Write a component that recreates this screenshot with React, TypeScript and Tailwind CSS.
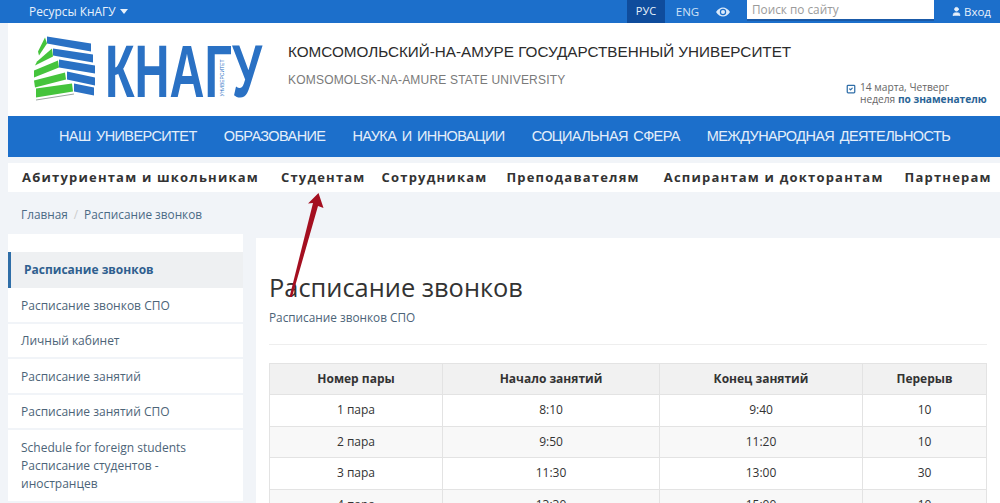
import { User, SquareCheck } from "lucide-react";

const mainNav = ["НАШ УНИВЕРСИТЕТ", "ОБРАЗОВАНИЕ", "НАУКА И ИННОВАЦИИ", "СОЦИАЛЬНАЯ СФЕРА", "МЕЖДУНАРОДНАЯ ДЕЯТЕЛЬНОСТЬ"];
const audience = [
    { label: "Абитуриентам и школьникам", cls: "" },
    { label: "Студентам", cls: "ml-[22px]" },
    { label: "Сотрудникам", cls: "ml-[16px]" },
    { label: "Преподавателям", cls: "ml-[19px]" },
    { label: "Аспирантам и докторантам", cls: "ml-[24px]" },
    { label: "Партнерам", cls: "ml-[21px]" },
];
const sideItems = ["Расписание звонков СПО", "Личный кабинет", "Расписание занятий", "Расписание занятий СПО"];
const rows = [
    ["1 пара", "8:10", "9:40", "10"],
    ["2 пара", "9:50", "11:20", "10"],
    ["3 пара", "11:30", "13:00", "30"],
    ["4 пара", "13:30", "15:00", "10"],
];

function Logo() {
    return (
        <svg viewBox="0 0 235 70" className="w-[235px] h-[70px] shrink-0">
            <g transform="translate(0,-1.5)">
                <g fill="#2a71c4">
                    <polygon points="17,3 61,10 61,18 17,10" />
                    <polygon points="23,15 63,21 63,29 23,22" />
                    <polygon points="29,26 65,32 65,40 29,34" />
                    <polygon points="37,38 65,44 65,52 37,46" />
                    <polygon points="44,50 64,54 64,62 44,58" />
                </g>
                <g fill="#45c43c">
                    <polygon points="15,4 17,10 9,22 8,18" />
                    <polygon points="22,15 23,23 5,32 7,28" />
                    <polygon points="28,27 29,34 4,44 4,37" />
                    <polygon points="35,39 36,46 5,54 4,47" />
                    <polygon points="42,50 43,58 6,64 6,55" />
                </g>
                <polygon points="6,66 44,60 44,61 6,67" fill="#9aa5a0" />
            </g>
            <text x="75" y="61.5" textLength="157" lengthAdjust="spacingAndGlyphs" fill="#2a71c4" fontSize="75" fontWeight="700" fontFamily="'Liberation Sans', sans-serif">КНАГУ</text>
            <text transform="translate(194,61.5) rotate(-90)" fontSize="5" fill="#2a71c4" fontFamily="'Liberation Sans', sans-serif">УНИВЕРСИТЕТ</text>
        </svg>
    );
}

export default function App() {
    return (
        <div className="relative w-[1000px] h-[503px] overflow-hidden bg-[#f1f4f8] font-['Open_Sans',sans-serif] text-[#333]">
            {/* top bar */}
            <div className="h-[23px] bg-[#1c6fcb] flex items-center text-[11.5px] text-[#e8f1fb]">
                <div className="pl-[29px] flex items-center gap-[4px] w-[627px] text-[11.9px]">
                    Ресурсы КнАГУ
                    <svg width="8" height="5" viewBox="0 0 8 5"><polygon points="0,0 8,0 4,5" fill="currentColor" /></svg>
                </div>
                <div className="h-full w-[38px] bg-[#0f4c9c] flex items-center justify-center text-[11px]">РУС</div>
                <div className="h-full w-[42px] pl-[3px] flex items-center justify-center text-[#cfe2f7]">ENG</div>
                <div className="h-full w-[32px] flex items-center justify-center text-[#dbeafa]">
                    <svg width="14" height="10" viewBox="0 0 14 10">
                        <path d="M0 5C2 2 4.500 0.500 7 0.500S12 2 14 5C12 8 9.500 9.500 7 9.500S2 8 0 5Z" fill="currentColor" />
                        <circle cx="7" cy="5" r="3.200" fill="#1c6fcb" />
                        <circle cx="7" cy="5" r="2" fill="currentColor" />
                    </svg>
                </div>
                <div className="ml-[8px] self-start h-[21px] w-[187px] bg-white border-b-2 border-[#1a5aa8] pl-[5px] text-[11.8px] text-[#9a9a9a] flex items-center">Поиск по сайту</div>
                <div className="ml-[17px] flex items-center gap-[2px]">
                    <User size={11} fill="currentColor" />
                    Вход
                </div>
            </div>

            {/* header */}
            <div className="ml-[8px] h-[93px] bg-white flex items-center pl-[22px] relative">
                <Logo />
                <div className="ml-[23px] font-['Liberation_Sans',sans-serif] -mt-[10px]">
                    <div className="text-[15.25px] leading-[20px] text-[#2b2b2b]">КОМСОМОЛЬСКИЙ-НА-АМУРЕ ГОСУДАРСТВЕННЫЙ УНИВЕРСИТЕТ</div>
                    <div className="mt-[10px] text-[12px] leading-[16px] text-[#7a7a7a] tracking-[0.2px]">KOMSOMOLSK-NA-AMURE STATE UNIVERSITY</div>
                </div>
                <div className="absolute left-[838px] top-[58px] flex gap-[4px] text-[10.2px] leading-[12px] text-[#666]">
                    <SquareCheck size={10} className="mt-[3px] text-[#2f6ea8]" strokeWidth={3} />
                    <div>
                        <div>14 марта, Четверг</div>
                        <div>неделя <b className="text-[#2a6496]">по знаменателю</b></div>
                    </div>
                </div>
            </div>

            {/* main nav */}
            <div className="ml-[8px] h-[41px] bg-[#1c6fcb] flex items-center pl-[51px] gap-[27px] font-['Liberation_Sans',sans-serif] text-[14.5px] tracking-[-0.6px] [word-spacing:2px] text-[#e4eefa]">
                {mainNav.map((item) => (
                    <span key={item} className="whitespace-nowrap">{item}</span>
                ))}
            </div>

            {/* audience nav */}
            <div className="ml-[8px] mt-[6px] h-[29px] bg-white flex items-center pl-[14px] text-[13px] font-bold text-[#333] tracking-[1.2px]">
                {audience.map((item) => (
                    <span key={item.label} className={"whitespace-nowrap " + item.cls}>{item.label}</span>
                ))}
            </div>

            {/* breadcrumb */}
            <div className="pl-[21px] h-[42px] pt-[4px] flex items-center text-[11.8px] text-[#4a6a85]">
                Главная
                <span className="mx-[6px] text-[#ccc]">/</span>
                Расписание звонков
            </div>

            <div className="flex items-start">
                {/* sidebar */}
                <div className="ml-[8px] w-[235px] shrink-0 bg-white pt-[18px] text-[12px] text-[#4c6478]">
                    <div className="h-[36px] bg-[#eef0f2] border-l-[3px] border-[#2f6ea8] pl-[13px] flex items-center font-bold text-[#2f5f8f]">Расписание звонков</div>
                    {sideItems.map((item) => (
                        <div key={item} className="h-[35.5px] pl-[13px] pt-[2px] flex items-center border-b-2 border-[#f1f4f8]">{item}</div>
                    ))}
                    <div className="pl-[13px] pt-[9px] pb-[8px] leading-[18px] border-b-2 border-[#f1f4f8]">
                        Schedule for foreign students
                        <br />
                        Расписание студентов -
                        <br />
                        иностранцев
                    </div>
                </div>

                {/* content */}
                <div className="ml-[13px] mt-[4px] flex-1 bg-white pl-[13px] pr-[13px] h-[400px]">
                    <h1 className="mt-[33px] text-[25.4px] leading-[32px] text-[#333]">Расписание звонков</h1>
                    <div className="mt-[6px] text-[11.8px] leading-[16px] text-[#4c6478]">Расписание звонков СПО</div>
                    <div className="mt-[19px] border-t border-[#eee]" />
                    <table className="mt-[18px] w-[718px] table-fixed border-collapse text-[12px] text-center">
                        <thead>
                            <tr className="h-[31px] bg-[#f1f1f1] font-bold">
                                <th className="w-[173px] border border-[#e3e3e3]">Номер пары</th>
                                <th className="w-[217px] border border-[#e3e3e3]">Начало занятий</th>
                                <th className="w-[203px] border border-[#e3e3e3]">Конец занятий</th>
                                <th className="border border-[#e3e3e3]">Перерыв</th>
                            </tr>
                        </thead>
                        <tbody>
                            {rows.map((row, i) => (
                                <tr key={row[0]} className={i % 2 === 1 ? "h-[31.5px] bg-[#f8f8f8]" : "h-[31.5px] bg-white"}>
                                    {row.map((cell, j) => (
                                        <td key={j} className="border border-[#e3e3e3]">{cell}</td>
                                    ))}
                                </tr>
                            ))}
                        </tbody>
                    </table>
                </div>
            </div>

            {/* red annotation arrow */}
            <svg className="absolute left-0 top-0 pointer-events-none" width="1000" height="503">
                <polygon points="318.500,193 308,203.500 313,203 289.500,297 292,297 318,206 323.500,208" fill="#a40f20" />
            </svg>
        </div>
    );
}
